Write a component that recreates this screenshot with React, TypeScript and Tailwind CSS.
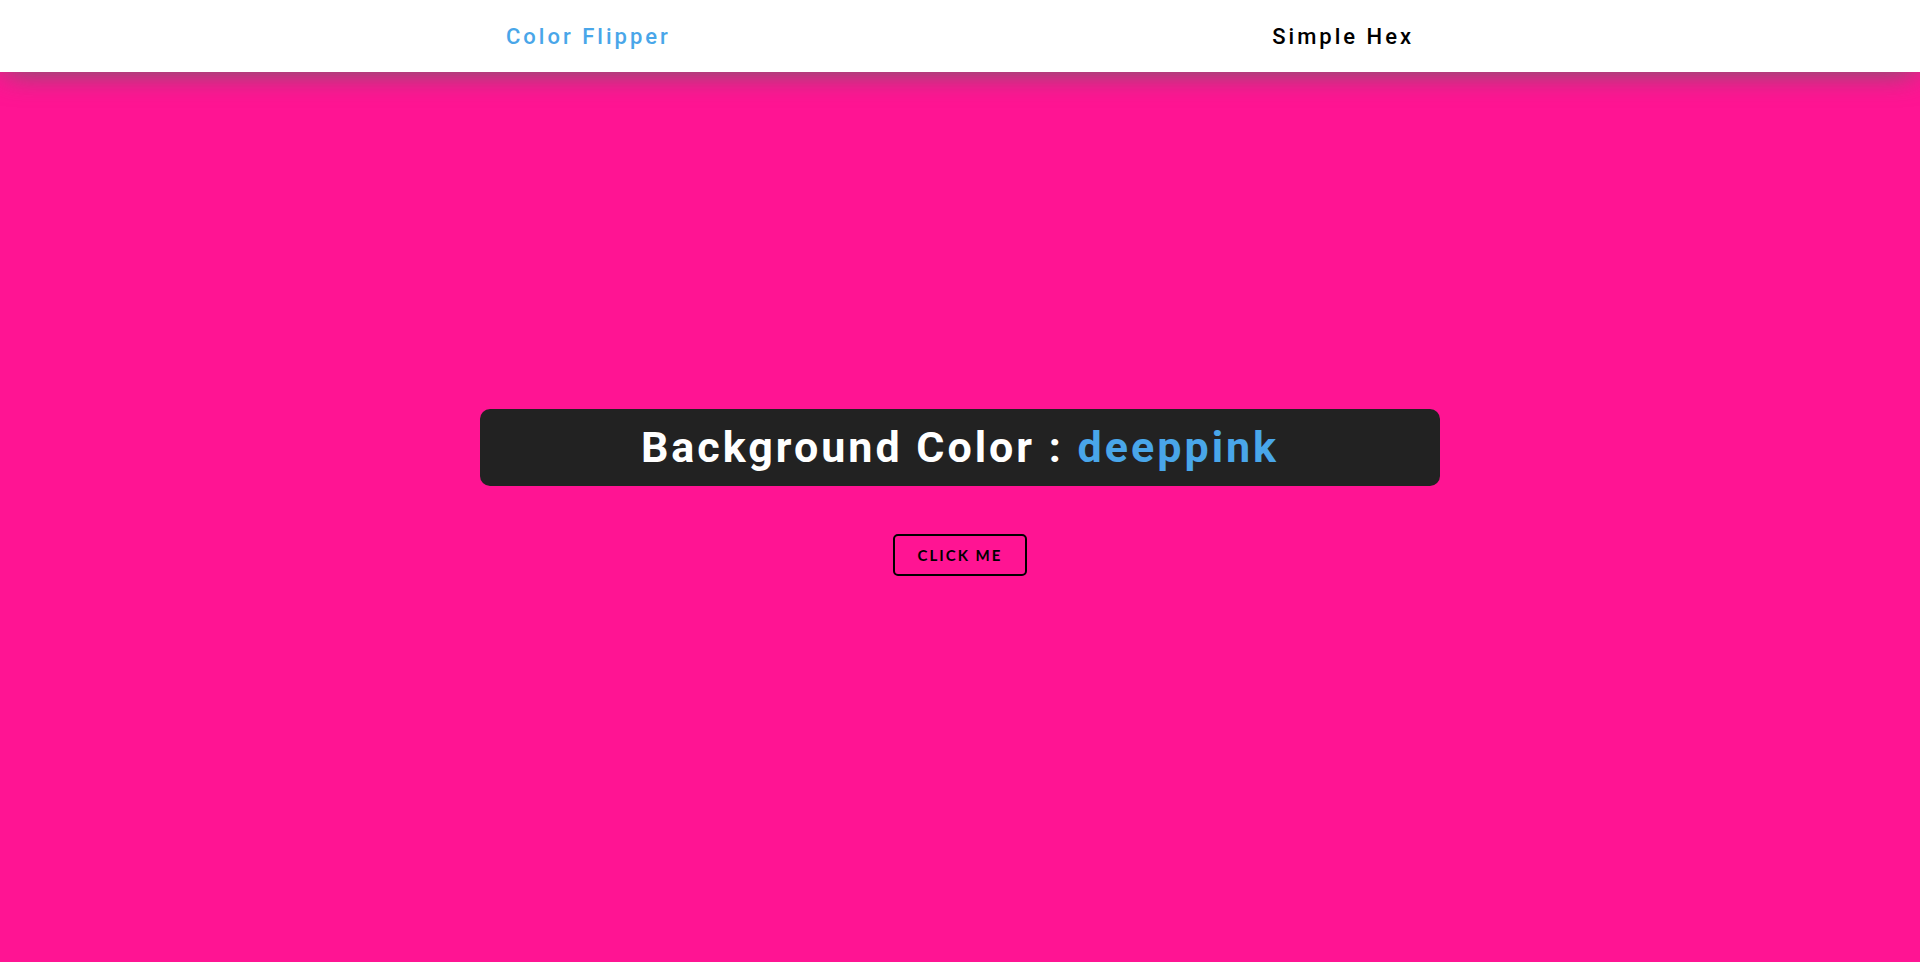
import { useState } from "react";

const colors = ["deeppink", "green", "rgba(133,122,200)", "#f15025"];

export default function App() {
  const [index, setIndex] = useState(0);

  return (
    <div
      className="flex min-h-screen flex-col font-['Roboto',sans-serif]"
      style={{ backgroundColor: colors[index] }}
    >
      <nav className="bg-white pt-[21px] pb-[19px] shadow-[0_5px_30px_-5px_#666]">
        <div className="mx-auto flex w-1/2 items-center justify-between px-[26px] text-[22px] leading-8 font-medium tracking-[3px]">
          <span className="text-[#49a6e9]">Color Flipper</span>
          <a href="#hex" className="text-black">
            Simple Hex
          </a>
        </div>
      </nav>
      <main className="flex flex-1 flex-col items-center justify-center gap-12 pb-[50px]">
        <h2 className="w-1/2 rounded-[10px] bg-[#222] py-2 text-center text-[43px] leading-[61px] font-bold tracking-[3px] text-white">
          Background Color : <span className="text-[#49a6e9]">{colors[index]}</span>
        </h2>
        <button
          type="button"
          onClick={() => setIndex((index + 1) % colors.length)}
          className="rounded-[5px] border-2 border-black px-[23px] py-2 font-['Lato',sans-serif] text-[15px] leading-[22px] font-bold tracking-[2px] text-black uppercase"
        >
          Click me
        </button>
      </main>
    </div>
  );
}
